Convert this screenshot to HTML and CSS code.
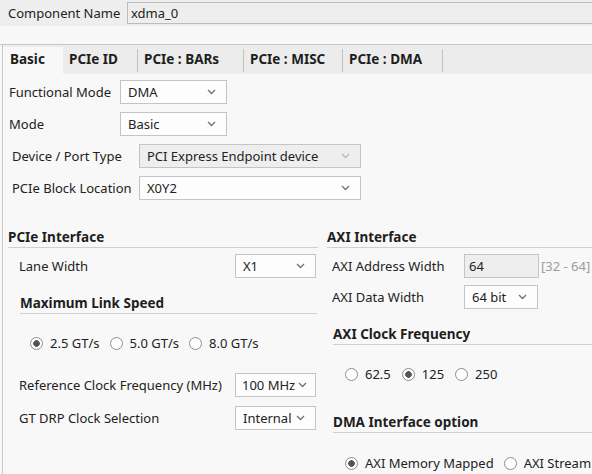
FILE: index.html
```html
<!DOCTYPE html>
<html>
<head>
<meta charset="utf-8">
<link rel="stylesheet" href="styles.css">
</head>
<body>
<div class="top">
  <span class="top-label">Component Name</span>
  <div class="name-input">xdma_0</div>
</div>
<div class="band"></div>
<div class="tabbox">
  <div class="tabbox-inner">
    <div class="tabs">
      <div class="tab active">Basic</div>
      <div class="tab t2">PCIe ID<i class="sep"></i></div>
      <div class="tab t3">PCIe : BARs<i class="sep"></i></div>
      <div class="tab t4">PCIe : MISC<i class="sep"></i></div>
      <div class="tab t5">PCIe : DMA<i class="sep"></i></div>
    </div>
    <div class="panel">
      <div class="form g1">
        <div class="row"><span class="lbl">Functional Mode</span><div class="sel w-fm">DMA<svg class="chev" width="9" height="6" viewBox="0 0 9 6"><path d="M1 1l3.5 3.5L8 1"/></svg></div></div>
        <div class="row"><span class="lbl">Mode</span><div class="sel w-fm">Basic<svg class="chev" width="9" height="6" viewBox="0 0 9 6"><path d="M1 1l3.5 3.5L8 1"/></svg></div></div>
      </div>
      <div class="form g2">
        <div class="row"><span class="lbl">Device / Port Type</span><div class="sel w-dev disabled">PCI Express Endpoint device<svg class="chev" width="9" height="6" viewBox="0 0 9 6"><path d="M1 1l3.5 3.5L8 1"/></svg></div></div>
        <div class="row"><span class="lbl">PCIe Block Location</span><div class="sel w-dev">X0Y2<svg class="chev" width="9" height="6" viewBox="0 0 9 6"><path d="M1 1l3.5 3.5L8 1"/></svg></div></div>
      </div>
      <div class="cols">
        <div class="col col-left">
          <div class="sec-head">PCIe Interface</div>
          <div class="lrow mt6"><span>Lane Width</span><div class="sel w-lane">X1<svg class="chev" width="9" height="6" viewBox="0 0 9 6"><path d="M1 1l3.5 3.5L8 1"/></svg></div></div>
          <div class="sub-head speed-head">Maximum Link Speed</div>
          <div class="radios speed-radios">
            <span class="radio"><i class="dot on"></i>2.5 GT/s</span>
            <span class="radio"><i class="dot"></i>5.0 GT/s</span>
            <span class="radio"><i class="dot"></i>8.0 GT/s</span>
          </div>
          <div class="lrow mt22"><span>Reference Clock Frequency (MHz)</span><div class="sel w-lane tight">100 MHz<svg class="chev" width="9" height="6" viewBox="0 0 9 6"><path d="M1 1l3.5 3.5L8 1"/></svg></div></div>
          <div class="lrow mt9"><span>GT DRP Clock Selection</span><div class="sel w-lane">Internal<svg class="chev" width="9" height="6" viewBox="0 0 9 6"><path d="M1 1l3.5 3.5L8 1"/></svg></div></div>
        </div>
        <div class="col col-right">
          <div class="sec-head">AXI Interface</div>
          <div class="rrow mt6"><span class="rlbl">AXI Address Width</span><div class="txt">64</div><span class="hint">[32 - 64]</span></div>
          <div class="rrow mt7"><span class="rlbl">AXI Data Width</span><div class="sel w-data">64 bit<svg class="chev" width="9" height="6" viewBox="0 0 9 6"><path d="M1 1l3.5 3.5L8 1"/></svg></div></div>
          <div class="sub-head clk-head">AXI Clock Frequency</div>
          <div class="radios r-radios mt21">
            <span class="radio wide"><i class="dot"></i>62.5</span>
            <span class="radio wide"><i class="dot on"></i>125</span>
            <span class="radio wide"><i class="dot"></i>250</span>
          </div>
          <div class="sub-head dma-head">DMA Interface option</div>
          <div class="radios r-radios mt22">
            <span class="radio"><i class="dot on"></i>AXI Memory Mapped</span>
            <span class="radio"><i class="dot"></i>AXI Stream</span>
          </div>
        </div>
      </div>
    </div>
  </div>
</div>
</body>
</html>
```
FILE: styles.css
```css
html, body {
  margin: 0;
  padding: 0;
}
body {
  width: 592px;
  height: 474px;
  overflow: hidden;
  font-family: "Noto Sans", "Open Sans", sans-serif;
  font-size: 13px;
  color: #222;
  background: #f7f7f7;
}
.top {
  display: flex;
  align-items: center;
  height: 26px;
  background: #eeeeee;
  padding-left: 8px;
}
.top-label {
  width: 119px;
  flex: none;
}
.name-input {
  flex: 1;
  height: 22px;
  box-sizing: border-box;
  border: 1px solid #bcbcbc;
  border-right: none;
  background: #eeeeee;
  line-height: 20px;
  padding-left: 3px;
}
.band {
  height: 18px;
  background: #f7f7f7;
}
.tabbox {
  border-top: 1px solid #c8c8c8;
}
.tabbox-inner {
  margin-left: 2px;
  border-left: 1px solid #c8c8c8;
}
.tabs {
  display: flex;
  height: 29px;
  background: #ececec;
}
.tab {
  display: flex;
  align-items: center;
  box-sizing: border-box;
  height: 29px;
  padding-left: 6px;
  padding-bottom: 1px;
  font-weight: bold;
  font-size: 13.5px;
  color: #1e1e1e;
}
.tab.active {
  width: 60px;
  height: 27px;
  margin-top: 2px;
  padding-left: 7px;
  padding-bottom: 3px;
  background: #f8f8f8;
}
.t2 { width: 75px; }
.t3 { width: 106px; }
.t4 { width: 99px; }
.t5 { width: 100px; }
.sep {
  display: block;
  width: 1px;
  height: 23px;
  margin-left: auto;
  margin-top: 2px;
  background: #c2c2c2;
}
.panel {
  background: #f8f8f8;
  padding-top: 6px;
  height: 394px;
  overflow: hidden;
}
.form .row {
  display: flex;
  align-items: center;
  height: 24px;
  margin-bottom: 8px;
}
.g1 { padding-left: 6px; }
.g1 .lbl { width: 111px; }
.g2 { padding-left: 9px; }
.g2 .lbl { width: 127px; }
.sel {
  display: flex;
  align-items: center;
  justify-content: space-between;
  box-sizing: border-box;
  height: 24px;
  border: 1px solid #c4c4c4;
  background: #fdfdfd;
  padding: 0 10px 0 7px;
  white-space: nowrap;
  flex: none;
}
.sel.tight { padding-left: 6px; padding-right: 8px; }
.sel.disabled {
  background: #eeeeee;
}
.chev {
  flex: none;
}
.chev path {
  fill: none;
  stroke: #707070;
  stroke-width: 1.3;
}
.disabled .chev path {
  stroke: #b8b8b8;
}
.w-fm { width: 107px; }
.w-dev { width: 222px; }
.w-lane { width: 81px; }
.w-data { width: 74px; }
.cols {
  display: flex;
  padding-top: 20px;
}
.col-left {
  margin-left: 5px;
  width: 310px;
  flex: none;
}
.col-right {
  margin-left: 9px;
  flex: 1;
}
.sec-head, .sub-head {
  font-weight: bold;
  font-size: 13.5px;
  height: 19px;
  line-height: 19px;
  border-bottom: 1px solid #d0d0d0;
  color: #1e1e1e;
}
.lrow {
  display: flex;
  align-items: center;
  height: 24px;
  padding-left: 11px;
}
.lrow .sel {
  margin-left: auto;
  margin-right: 2px;
}
.mt6 { margin-top: 6px; }
.mt7 { margin-top: 7px; }
.mt9 { margin-top: 9px; }
.mt21 { margin-top: 21px; }
.mt22 { margin-top: 22px; }
.speed-head {
  margin: 16px 1px 0 12px;
}
.clk-head {
  margin: 16px 0 0 6px;
}
.dma-head {
  margin: 31px 0 0 6px;
}
.radios {
  display: flex;
  align-items: center;
  height: 16px;
}
.speed-radios {
  margin-top: 21px;
  padding-left: 22px;
}
.r-radios {
  padding-left: 18px;
}
.radio {
  display: flex;
  align-items: center;
  gap: 7px;
  margin-right: 10px;
  white-space: nowrap;
}
.radio.wide {
  margin-right: 11px;
}
.dot {
  display: block;
  width: 13px;
  height: 13px;
  box-sizing: border-box;
  border: 1px solid #8c8c8c;
  border-radius: 50%;
  background: #fff;
}
.dot.on {
  background: radial-gradient(circle, #555 0, #555 3px, #fff 3.6px);
}
.rrow {
  display: flex;
  align-items: center;
  height: 24px;
  padding-left: 5px;
}
.rlbl {
  width: 132px;
  flex: none;
}
.txt {
  width: 75px;
  height: 24px;
  box-sizing: border-box;
  border: 1px solid #c4c4c4;
  background: #eeeeee;
  padding-left: 4px;
  line-height: 22px;
  flex: none;
}
.hint {
  margin-left: 2px;
  color: #9c9c9c;
}
```
